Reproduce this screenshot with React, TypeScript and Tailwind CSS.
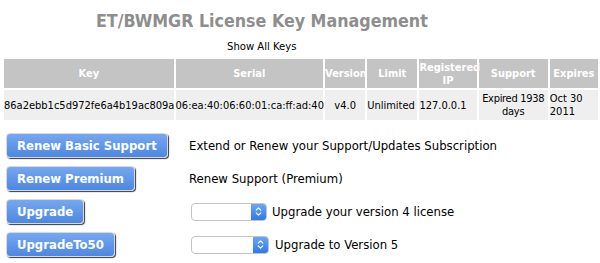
import { ChevronsUpDown } from "lucide-react";

const COLUMNS = [
  { label: "Key", w: "w-[169px]" },
  { label: "Serial", w: "w-[147px]" },
  { label: "Version", w: "w-[40px]" },
  { label: "Limit", w: "w-[50px]" },
  { label: "Registered IP", w: "w-[57px]" },
  { label: "Support", w: "w-[69px]" },
  { label: "Expires", w: "w-[48px]" },
];

function BlueButton({ label }: { label: string }) {
  return (
    <button
      type="button"
      className="h-[25px] rounded-[4px] border border-[#d8d8d8] bg-gradient-to-b from-[#76a8f0] to-[#4d87e2] px-[10px] text-[13px] font-bold leading-none text-white shadow-[1px_1px_1px_#3a3a3a]"
    >
      {label}
    </button>
  );
}

function SelectBox({ width }: { width: string }) {
  return (
    <div className={`flex h-[18px] ${width} overflow-hidden rounded-[4px] border border-[#c4c4c4] bg-white`}>
      <div className="flex-1" />
      <div className="flex w-[15px] items-center justify-center bg-gradient-to-b from-[#6aa6f5] to-[#2e78e6]">
        <ChevronsUpDown className="h-[11px] w-[11px] text-white" strokeWidth={2.5} />
      </div>
    </div>
  );
}

export default function App() {
  return (
    <div className="h-[263px] w-[600px] overflow-hidden bg-white font-['DejaVu_Sans_Condensed','DejaVu_Sans',sans-serif] text-black">
      {/* Title */}
      <div className="pl-[96px] pt-[9px] text-[17.7px] font-bold leading-[24px] text-[#8e8e8e]">
        ET/BWMGR License Key Management
      </div>
      <div className="mt-[7px] pl-[227px] text-[11.2px] leading-[14px]">Show All Keys</div>

      {/* Key table */}
      <table className="ml-[2px] mt-[3px] w-[598px] table-fixed border-separate border-spacing-[2px] text-[11px]">
        <colgroup>
          {COLUMNS.map((c) => (
            <col key={c.label} className={c.w} />
          ))}
        </colgroup>
        <thead>
          <tr>
            {COLUMNS.map((c) => (
              <th
                key={c.label}
                className="h-[29px] bg-[#c4c4c4] p-0 text-center align-middle font-bold leading-[13px] text-white"
              >
                {c.label}
              </th>
            ))}
          </tr>
        </thead>
        <tbody>
          <tr className="bg-[#efefef] leading-[13px]">
            <td className="h-[30px] whitespace-nowrap p-0 text-left">86a2ebb1c5d972fe6a4b19ac809a</td>
            <td className="whitespace-nowrap p-0 text-left">06:ea:40:06:60:01:ca:ff:ad:40</td>
            <td className="p-0 text-center">v4.0</td>
            <td className="p-0 text-left">Unlimited</td>
            <td className="p-0 text-left">127.0.0.1</td>
            <td className="whitespace-nowrap p-0 text-center tracking-[-0.3px]">
              Expired 1938
              <br />
              days
            </td>
            <td className="p-0 text-left">
              Oct 30
              <br />
              2011
            </td>
          </tr>
        </tbody>
      </table>

      {/* Actions */}
      <div className="mt-[11px] flex flex-col gap-[8px] pl-[6px] text-[13px]">
        <div className="flex items-center">
          <div className="w-[183px]">
            <BlueButton label="Renew Basic Support" />
          </div>
          <span>Extend or Renew your Support/Updates Subscription</span>
        </div>
        <div className="flex items-center">
          <div className="w-[183px]">
            <BlueButton label="Renew Premium" />
          </div>
          <span>Renew Support (Premium)</span>
        </div>
        <div className="flex items-center">
          <div className="w-[185px]">
            <BlueButton label="Upgrade" />
          </div>
          <SelectBox width="w-[76px]" />
          <span className="ml-[5px]">Upgrade your version 4 license</span>
        </div>
        <div className="flex items-center">
          <div className="w-[185px]">
            <BlueButton label="UpgradeTo50" />
          </div>
          <SelectBox width="w-[78px]" />
          <span className="ml-[6px]">Upgrade to Version 5</span>
        </div>
      </div>
    </div>
  );
}
